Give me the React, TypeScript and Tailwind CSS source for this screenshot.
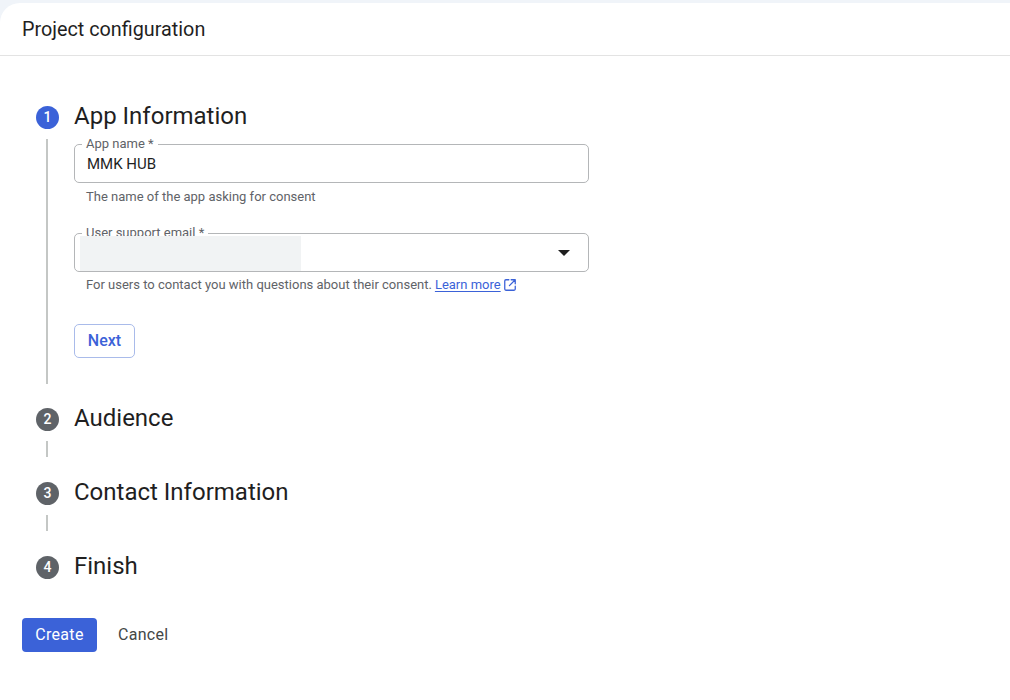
import React, { ReactNode } from "react";

interface StepProps {
  num: number;
  title: string;
  active?: boolean;
  lineClass?: string;
  children?: ReactNode;
}

const Step = ({ num, title, active, lineClass, children }: StepProps) => {
  return (
    <div className="flex gap-[15px]">
      <div className="flex w-[23px] flex-col items-center">
        <div
          className={`mt-[4px] flex h-[23px] w-[23px] shrink-0 items-center justify-center rounded-full text-[14px] font-medium text-white ${
            active ? "bg-[#3b62d8]" : "bg-[#5f6368]"
          }`}
        >
          {num}
        </div>
        {lineClass && <div className={`mt-[10px] w-[2px] -translate-x-[1px] bg-[#c4c7c5] ${lineClass}`} />}
      </div>
      <div className="flex-1">
        <h2 className="h-[27px] text-[24px] leading-[29px] text-[#1f1f1f]">{title}</h2>
        {children}
      </div>
    </div>
  );
};

const Field = ({ label, children }: { label: string; children: ReactNode }) => {
  return (
    <div className="relative flex h-[39px] w-[515px] items-center rounded-[5px] border border-[#b4b6b8] bg-white">
      <span className="absolute -top-[8px] left-[7px] bg-white px-[4px] text-[13px] leading-[14px] text-[#5f6368]">
        {label}
      </span>
      {children}
    </div>
  );
};

const App = () => {
  return (
    <div
      className="h-[700px] w-[1010px] overflow-hidden bg-[#f0f4f9] pt-[3px]"
      style={{ fontFamily: "Roboto, 'Liberation Sans', sans-serif" }}
    >
      <div className="h-full rounded-tl-[20px] bg-white">
        <div className="flex h-[53px] items-center border-b border-[#e3e3e3] pl-[22px]">
          <h1 className="pt-[1px] text-[19.8px] text-[#1f1f1f]">Project configuration</h1>
        </div>

        <div className="pl-[36px] pt-[46px]">
          <Step num={1} title="App Information" active lineClass="h-[245px]">
            <div className="mt-[15px]">
              <Field label="App name *">
                <span className="pl-[12px] pt-[1px] text-[15px] text-[#1f1f1f]">MMK HUB</span>
              </Field>
              <p className="mt-[6px] pl-[12px] text-[13px] leading-[16px] text-[#5f6368]">
                The name of the app asking for consent
              </p>
            </div>
            <div className="mt-[28px]">
              <Field label="User support email *">
                <div className="relative z-10 ml-[5px] h-[35px] w-[221px] self-end bg-[#f1f3f4]" />
                <svg viewBox="0 0 12 6" className="ml-auto mr-[18px] h-[6px] w-[12px]">
                  <path d="M0 0h12L6 6z" fill="#1f1f1f" />
                </svg>
              </Field>
              <p className="mt-[5px] flex items-center pl-[12px] text-[13px] leading-[16px] text-[#5f6368]">
                For users to contact you with questions about their consent.
                <a className="ml-[3px] text-[#3b62d8] underline underline-offset-2">Learn more</a>
                <svg
                  viewBox="0 0 24 24"
                  fill="none"
                  stroke="#3b62d8"
                  strokeWidth="2.2"
                  strokeLinecap="round"
                  strokeLinejoin="round"
                  className="ml-[2px] h-[14px] w-[14px]"
                >
                  <path d="M10 3H5a2 2 0 0 0-2 2v14a2 2 0 0 0 2 2h14a2 2 0 0 0 2-2v-5" />
                  <path d="M14 3h7v7M21 3L11 13" />
                </svg>
              </p>
            </div>
            <button className="mt-[31px] h-[34px] w-[61px] rounded-[5px] border border-[#a9bbea] text-[16px] font-medium text-[#3b62d8]">
              Next
            </button>
          </Step>

          <div className="mt-[20px]">
            <Step num={2} title="Audience" lineClass="h-[16px]" />
          </div>
          <div className="mt-[21px]">
            <Step num={3} title="Contact Information" lineClass="h-[16px]" />
          </div>
          <div className="mt-[21px]">
            <Step num={4} title="Finish" />
          </div>
        </div>

        <div className="mt-[39px] flex items-center pl-[22px]">
          <button className="h-[34px] w-[75px] rounded-[4px] bg-[#3b62d8] text-[16px] tracking-[0.3px] text-white">
            Create
          </button>
          <button className="ml-[21px] text-[16px] tracking-[0.3px] text-[#444746]">Cancel</button>
        </div>
      </div>
    </div>
  );
};

export default App;
